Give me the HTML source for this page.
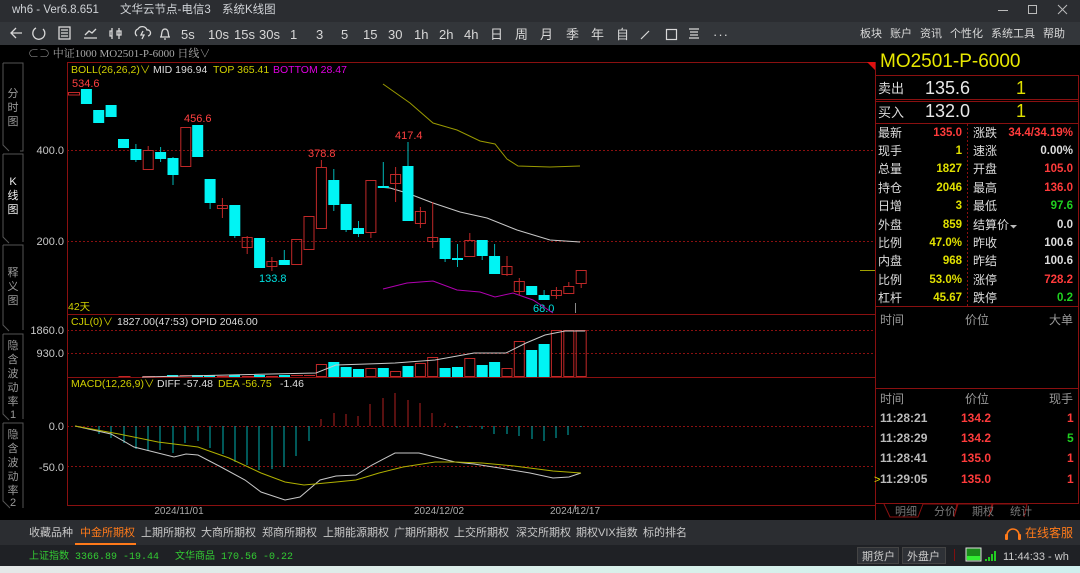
<!DOCTYPE html>
<html><head><meta charset="utf-8"><style>
*{margin:0;padding:0}
body{width:1080px;height:573px;overflow:hidden;background:#000;font-family:"Liberation Sans","Noto Sans CJK SC",sans-serif;position:relative}
.a{position:absolute;white-space:nowrap}
#title{left:0;top:0;width:1080px;height:22px;background:#2b2d31}
#tool{left:0;top:22px;width:1080px;height:23px;background:#33363a}
#tabs{left:0;top:520px;width:1080px;height:25px;background:#2b2d31}
#stat{left:0;top:545px;width:1080px;height:21px;background:#1f2125}
#bot{left:0;top:566px;width:1080px;height:7px;background:linear-gradient(90deg,#e4e8e8,#d8f0ea 60%,#cfefee)}
</style></head><body>
<div class="a" id="title"></div><div class="a" id="tool"></div><div class="a" id="tabs"></div><div class="a" id="stat"></div><div class="a" id="bot"></div>
<svg class="a" style="left:0;top:0" width="1080" height="573" viewBox="0 0 1080 573" font-family="Liberation Sans, Noto Sans CJK SC, sans-serif">
<!-- title -->
<g fill="#cfd2d6" font-size="11.5">
<text x="12" y="13">wh6  -  Ver6.8.651</text><text x="120" y="13">文华云节点-电信3</text><text x="222" y="13">系统K线图</text></g>
<g stroke="#bbb" fill="none" stroke-width="1"><line x1="998" y1="10.5" x2="1008" y2="10.5"/><rect x="1028.5" y="5.5" width="8" height="8"/><path d="M1058 5l9 9M1067 5l-9 9"/></g>
<!-- toolbar icons -->
<g stroke="#d8d8d8" fill="none" stroke-width="1.3">
<path d="M22 33h-11M16 28l-5 5 5 5"/>
<path d="M36 28a6 6 0 1 0 7 1"/>
<rect x="59" y="27" width="11" height="12"/><path d="M61 30h7M61 33h7M61 36h7"/>
<path d="M84 38h13M85 35l4-4 3 2 4-4"/>
<path d="M112 28v11M112 31h-2v5h2M119 28v11M117 31h4v4h-4z"/>
<path d="M137 36a4 4 0 0 1 1-7 5 5 0 0 1 9 1 3 3 0 0 1 1 6M143 31l-2 4h3l-2 4"/>
<path d="M160 37h10M161 37c1-2 0-8 4-8s3 6 4 8M164 39h2"/>
</g>
<g fill="#d8d8d8" font-size="13">
<text x="181" y="39">5s</text><text x="208" y="39">10s</text><text x="234" y="39">15s</text><text x="259" y="39">30s</text>
<text x="290" y="39">1</text><text x="316" y="39">3</text><text x="341" y="39">5</text><text x="363" y="39">15</text><text x="388" y="39">30</text>
<text x="414" y="39">1h</text><text x="439" y="39">2h</text><text x="464" y="39">4h</text><text x="490" y="39">日</text><text x="515" y="39">周</text>
<text x="540" y="39">月</text><text x="566" y="39">季</text><text x="591" y="39">年</text><text x="616" y="39">自</text>
<text x="713" y="39" letter-spacing="1">···</text></g>
<g stroke="#d8d8d8" fill="none" stroke-width="1.2"><path d="M641 39l8-8"/><rect x="666.5" y="29.5" width="10" height="10"/><path d="M689 29h10M690 32h8M690 35h8M689 38h10"/></g>
<g fill="#d8d8d8" font-size="11"><text x="860" y="37">板块</text><text x="890" y="37">账户</text><text x="920" y="37">资讯</text><text x="950" y="37">个性化</text><text x="991" y="37">系统工具</text><text x="1043" y="37">帮助</text></g>
<!-- chart header -->
<g fill="#a8a8a8" font-size="11" font-family="Liberation Serif, Noto Serif CJK SC, serif"><text x="28" y="57">⊂⊃ 中证1000 MO2501-P-6000   日线∨</text></g>
<!-- left tabs -->
<g stroke="#555" fill="none"><path d="M3 63h20v88l-3 0M3 63v82l6 6"/><path d="M3 154h20v88M3 154v83l6 6"/><path d="M3 245h20v85M3 245v80l6 6"/><path d="M3 334h20v85M3 334v80l6 6"/><path d="M3 423h20v85M3 423v78l7 7"/></g>
<g fill="#999" font-size="11" text-anchor="middle"><text x="13" y="97">分</text><text x="13" y="111">时</text><text x="13" y="125">图</text>
<text x="13" y="185" fill="#eee">K</text><text x="13" y="199" fill="#eee">线</text><text x="13" y="213" fill="#eee">图</text>
<text x="13" y="276">释</text><text x="13" y="290">义</text><text x="13" y="304">图</text>
<text x="13" y="349">隐</text><text x="13" y="363">含</text><text x="13" y="377">波</text><text x="13" y="391">动</text><text x="13" y="405">率</text><text x="13" y="418">1</text>
<text x="13" y="438">隐</text><text x="13" y="452">含</text><text x="13" y="466">波</text><text x="13" y="480">动</text><text x="13" y="494">率</text><text x="13" y="506">2</text></g>
<!-- axes -->
<g fill="#c8c8c8" font-size="11" text-anchor="end"><text x="64" y="154">400.0</text><text x="64" y="245">200.0</text><text x="64" y="334">1860.0</text><text x="64" y="357">930.0</text><text x="64" y="430">0.0</text><text x="64" y="471">-50.0</text></g>
<g stroke="#8a1010" stroke-dasharray="2 2"><line x1="67" y1="150.5" x2="875" y2="150.5"/><line x1="67" y1="241.5" x2="875" y2="241.5"/><line x1="67" y1="330.5" x2="875" y2="330.5"/><line x1="67" y1="353.5" x2="875" y2="353.5"/><line x1="67" y1="426.5" x2="875" y2="426.5"/><line x1="67" y1="466.5" x2="875" y2="466.5"/></g>
<g stroke="#8a1010" fill="none"><path d="M67.5 62v443.5H875.5M67 62.5h809M67 314.5h808M67 377.5h808M875.5 62V520"/></g>
<path d="M867 62h8v8z" fill="#e01010"/>
<line x1="860" y1="270.5" x2="875" y2="270.5" stroke="#a0a000"/>
<!-- indicator headers -->
<g font-size="10.5"><text x="71" y="73" fill="#d0d000">BOLL(26,26,2)∨</text><text x="153" y="73" fill="#ddd">MID 196.94</text><text x="213" y="73" fill="#d0d000">TOP 365.41</text><text x="273" y="73" fill="#e000e0">BOTTOM 28.47</text>
<text x="68" y="310" fill="#d0d000">42天</text>
<text x="71" y="325" fill="#d0d000">CJL(0)∨</text><text x="117" y="325" fill="#ddd">1827.00(47:53)  OPID 2046.00</text>
<text x="71" y="387" fill="#d0d000">MACD(12,26,9)∨</text><text x="157" y="387" fill="#ddd">DIFF -57.48</text><text x="218" y="387" fill="#d0d000">DEA -56.75</text><text x="280" y="387" fill="#ddd">-1.46</text></g>
<!-- candle labels -->
<g font-size="11"><text x="72" y="87" fill="#ff4040">534.6</text><text x="184" y="122" fill="#ff4040">456.6</text><text x="308" y="157" fill="#ff4040">378.8</text><text x="395" y="139" fill="#ff4040">417.4</text><text x="259" y="282" fill="#00e0e0">133.8</text><text x="533" y="312" fill="#00e0e0">68.0</text></g>
<!-- BOLL lines -->
<g fill="none" stroke-width="1"><polyline stroke="#9a9a00" points="383,84 410,103 433,123 457,130 480,141 495,144 507,159 518,166 550,167 580,166"/>
<polyline stroke="#c8c8c8" points="378,187 390,188 407,193 433,203 460,212 487,218 517,230 550,240 580,242"/>
<polyline stroke="#b000b0" points="383,289 407,283 433,281 457,290 480,292 495,297 513,293 533,300 553,313"/></g>
<!-- candles -->
<g stroke-width="1">
<g stroke="#00b8b8"><line x1="135.9" y1="144" x2="135.9" y2="162"/><line x1="160.6" y1="147" x2="160.6" y2="162"/><line x1="173" y1="157" x2="173" y2="185"/><line x1="210.1" y1="179" x2="210.1" y2="209"/><line x1="234.8" y1="205" x2="234.8" y2="238"/><line x1="284.3" y1="250" x2="284.3" y2="265"/><line x1="333.8" y1="169" x2="333.8" y2="211"/><line x1="346.1" y1="204" x2="346.1" y2="232"/><line x1="358.5" y1="221" x2="358.5" y2="237"/><line x1="383.3" y1="162" x2="383.3" y2="188"/><line x1="408" y1="142" x2="408" y2="221"/><line x1="445.1" y1="238" x2="445.1" y2="262"/><line x1="457.5" y1="244" x2="457.5" y2="267"/><line x1="482.2" y1="240" x2="482.2" y2="260"/><line x1="494.6" y1="244" x2="494.6" y2="274"/><line x1="544.1" y1="290" x2="544.1" y2="300"/></g>
<g fill="#00f4f4"><rect x="80.9" y="89" width="11" height="15"/><rect x="93.2" y="110" width="11" height="13"/><rect x="105.6" y="105" width="11" height="12"/><rect x="118" y="139" width="11" height="9"/><rect x="130.4" y="149" width="11" height="11"/><rect x="155.1" y="152" width="11" height="7"/><rect x="167.5" y="158" width="11" height="17"/><rect x="192.2" y="125" width="11" height="32"/><rect x="204.6" y="179" width="11" height="24"/><rect x="229.3" y="205" width="11" height="31"/><rect x="254.1" y="238" width="11" height="30"/><rect x="278.8" y="260" width="11" height="5"/><rect x="328.3" y="180" width="11" height="25"/><rect x="340.6" y="204" width="11" height="26"/><rect x="353" y="228" width="11" height="6"/><rect x="377.8" y="186" width="11" height="2"/><rect x="402.5" y="166" width="11" height="55"/><rect x="439.6" y="238" width="11" height="21"/><rect x="452" y="258" width="11" height="2"/><rect x="476.7" y="240" width="11" height="16"/><rect x="489.1" y="256" width="11" height="18"/><rect x="526.2" y="286" width="11" height="9"/><rect x="538.6" y="295" width="11" height="5"/></g>
<g stroke="#c02828" fill="none">
<rect x="68.5" y="92.5" width="11" height="2.5"/><line x1="148.2" y1="146" x2="148.2" y2="150"/><rect x="143.2" y="150.5" width="10" height="19"/><rect x="180.8" y="127.5" width="10" height="39"/><line x1="222.4" y1="198" x2="222.4" y2="218"/><rect x="217.4" y="205.5" width="10" height="3"/><line x1="247.2" y1="236" x2="247.2" y2="254"/><rect x="242.2" y="237.5" width="10" height="10"/><line x1="271.9" y1="257" x2="271.9" y2="271"/><rect x="266.9" y="261.5" width="10" height="5"/><rect x="291.7" y="239.5" width="10" height="25"/><rect x="304" y="216.5" width="10" height="33"/><line x1="321.4" y1="160" x2="321.4" y2="167"/><rect x="316.4" y="167.5" width="10" height="61"/><line x1="370.9" y1="233" x2="370.9" y2="238"/><rect x="365.9" y="180.5" width="10" height="52"/><line x1="395.6" y1="167" x2="395.6" y2="202"/><rect x="390.6" y="174.5" width="10" height="9"/><line x1="420.4" y1="207" x2="420.4" y2="228"/><rect x="415.4" y="211.5" width="10" height="12"/><line x1="432.7" y1="202" x2="432.7" y2="248"/><rect x="427.7" y="237.5" width="10" height="4"/><line x1="469.8" y1="233" x2="469.8" y2="240"/><rect x="464.8" y="240.5" width="10" height="16"/><line x1="507" y1="256" x2="507" y2="276"/><rect x="502" y="266.5" width="10" height="8"/><line x1="519.3" y1="278" x2="519.3" y2="295"/><rect x="514.3" y="281.5" width="10" height="10"/><line x1="556.4" y1="287" x2="556.4" y2="299"/><rect x="551.4" y="290.5" width="10" height="5"/><line x1="568.8" y1="282" x2="568.8" y2="286"/><rect x="563.8" y="286.5" width="10" height="7"/><line x1="581.2" y1="284" x2="581.2" y2="288"/><rect x="576.2" y="270.5" width="10" height="13"/></g>
<line x1="575.5" y1="303" x2="575.5" y2="313" stroke="#888"/>
</g>
<!-- volume -->
<g fill="none" stroke="#c02828"><path d="M118.5 376.5h12M143 376.5h12M180 375.5h12M217 376.5h12M242 376.5h12M266 376.5h12M291 375.5h12M304 375.5h11"/></g>
<g fill="#00f4f4"><rect x="167" y="375" width="11" height="2"/><rect x="192" y="375" width="11" height="2"/><rect x="204" y="375" width="11" height="2"/><rect x="229" y="375" width="11" height="2"/><rect x="254" y="375" width="11" height="2"/><rect x="279" y="375" width="11" height="2"/>
<rect x="328.3" y="362" width="11" height="15"/><rect x="340.6" y="367" width="11" height="10"/><rect x="353" y="369" width="11" height="8"/><rect x="377.8" y="368" width="11" height="9"/><rect x="402.5" y="366" width="11" height="11"/><rect x="439.6" y="368" width="11" height="9"/><rect x="452" y="367" width="11" height="10"/><rect x="476.7" y="365" width="11" height="12"/><rect x="489.1" y="362" width="11" height="15"/><rect x="526.2" y="350" width="11" height="27"/><rect x="538.6" y="344" width="11" height="33"/></g>
<g fill="none" stroke="#c02828"><rect x="316.4" y="364.5" width="10" height="12"/><rect x="365.9" y="368.5" width="10" height="8"/><rect x="390.6" y="371.5" width="10" height="5"/><rect x="415.4" y="363.5" width="10" height="13"/><rect x="427.7" y="357.5" width="10" height="19"/><rect x="464.8" y="358.5" width="10" height="18"/><rect x="502" y="368.5" width="10" height="8"/><rect x="514.3" y="341.5" width="10" height="35"/><rect x="551.4" y="330.5" width="10" height="46"/><rect x="563.8" y="330.5" width="10" height="46"/><rect x="576.2" y="330.5" width="10" height="46"/></g>
<polyline fill="none" stroke="#c8c8c8" points="142,377 316,373 336,365 395,363 435,360 474,353 506,353 526,343 545,335 565,331 585,331"/>
<!-- MACD -->
<g stroke="#00b0b0"><path d="M99 426v8M111 426v12M124 426v17M136 426v23M148 426v25M160 426v24M173 426v27M185 426v17M198 426v15M210 426v22M223 426v28M235 426v36M247 426v39M259 426v44M272 426v43M284 426v41M296 426v30M309 426v15M457 426v2M470 426v1M482 426v3M494 426v8M507 426v8M519 426v10M532 426v13M544 426v15M556 426v12M568 426v9M581 426v1"/></g>
<g stroke="#b02020"><path d="M321 426v-7M334 426v-13M346 426v-12M358 426v-10M370 426v-22M383 426v-28M395 426v-33M408 426v-26M420 426v-23M432 426v-13M445 426v-3"/></g>
<polyline fill="none" stroke="#c8c8c8" points="75,426 111,434 134,447 174,457 186,454 198,455 221,467 245,480 261,492 285,500 300,497 320,480 336,476 356,475 372,465 395,453 419,453 435,457 455,462 474,464 506,469 530,473 553,478 569,477 581,473"/>
<polyline fill="none" stroke="#b0b000" points="75,426 119,434 158,442 198,447 229,458 261,473 285,482 304,485 336,482 356,480 379,473 403,467 435,462 455,462 482,463 514,466 553,471 581,473"/>
<line x1="575.5" y1="505" x2="575.5" y2="512" stroke="#888"/>
<g fill="#aaa" font-size="10" text-anchor="middle"><text x="179" y="514">2024/11/01</text><text x="439" y="514">2024/12/02</text><text x="575" y="514">2024/12/17</text></g>
<!-- right panel -->
<text x="880" y="67" fill="#e8e800" font-size="19">MO2501-P-6000</text>
<g stroke="#8a1010" fill="none"><path d="M876 75.5h203M876 99.5h203M876 101.5h203M876 123.5h203M876 306.5h203M876 388.5h203M876 503.5h203M1078.5 75v429"/><line x1="967.5" y1="124" x2="967.5" y2="306" stroke-dasharray="2 2"/></g>
<g fill="#ddd" font-size="13"><text x="878" y="93">卖出</text><text x="878" y="117">买入</text></g>
<g font-size="18"><text x="925" y="94" fill="#e8e8e8">135.6</text><text x="925" y="117" fill="#e8e8e8">132.0</text><text x="1016" y="94" fill="#e0e000">1</text><text x="1016" y="117" fill="#e0e000">1</text></g>
<g fill="#ddd" font-size="12"><text x="878" y="137">最新</text><text x="878" y="155">现手</text><text x="878" y="173">总量</text><text x="878" y="192">持仓</text><text x="878" y="210">日增</text><text x="878" y="229">外盘</text><text x="878" y="247">比例</text><text x="878" y="265">内盘</text><text x="878" y="284">比例</text><text x="878" y="302">杠杆</text>
<text x="973" y="137">涨跌</text><text x="973" y="155">速涨</text><text x="973" y="173">开盘</text><text x="973" y="192">最高</text><text x="973" y="210">最低</text><text x="973" y="229">结算价</text><text x="973" y="247">昨收</text><text x="973" y="265">昨结</text><text x="973" y="284">涨停</text><text x="973" y="302">跌停</text></g>
<path d="M1010 225h7l-3.5 3.5z" fill="#bbb"/>
<g font-size="11.5" font-weight="bold" text-anchor="end">
<text x="962" y="136" fill="#ff3b3b">135.0</text><text x="962" y="154" fill="#e0e000">1</text><text x="962" y="172" fill="#e0e000">1827</text><text x="962" y="191" fill="#e0e000">2046</text><text x="962" y="209" fill="#e0e000">3</text><text x="962" y="228" fill="#e0e000">859</text><text x="962" y="246" fill="#e0e000">47.0%</text><text x="962" y="264" fill="#e0e000">968</text><text x="962" y="283" fill="#e0e000">53.0%</text><text x="962" y="301" fill="#e0e000">45.67</text>
<text x="1073" y="136" fill="#ff3b3b">34.4/34.19%</text><text x="1073" y="154" fill="#ddd">0.00%</text><text x="1073" y="172" fill="#ff3b3b">105.0</text><text x="1073" y="191" fill="#ff3b3b">136.0</text><text x="1073" y="209" fill="#20d020">97.6</text><text x="1073" y="228" fill="#ddd">0.0</text><text x="1073" y="246" fill="#ddd">100.6</text><text x="1073" y="264" fill="#ddd">100.6</text><text x="1073" y="283" fill="#ff3b3b">728.2</text><text x="1073" y="301" fill="#20d020">0.2</text></g>
<g fill="#999" font-size="12"><text x="880" y="324">时间</text><text x="965" y="324">价位</text><text x="1049" y="324">大单</text><text x="880" y="403">时间</text><text x="965" y="403">价位</text><text x="1049" y="403">现手</text></g>
<g font-size="12" font-weight="bold"><g fill="#bbb"><text x="880" y="422">11:28:21</text><text x="880" y="442">11:28:29</text><text x="880" y="462">11:28:41</text><text x="880" y="483">11:29:05</text></g>
<g fill="#ff3b3b"><text x="961" y="422">134.2</text><text x="961" y="442">134.2</text><text x="961" y="462">135.0</text><text x="961" y="483">135.0</text><text x="1067" y="422">1</text><text x="1067" y="462">1</text><text x="1067" y="483">1</text></g><text x="1067" y="442" fill="#20d020">5</text></g>
<text x="874" y="483" fill="#e0e000" font-size="11">&gt;</text>
<g stroke="#8a1010" fill="none"><path d="M884 504l6 13h28l5-13M918 517l5-13h34l-3 13M954 517l4-13h34l-3 13M989 517l4-13h34l-3 13"/></g>
<g fill="#777" font-size="11"><text x="895" y="515">明细</text><text x="934" y="515">分价</text><text x="972" y="515">期权</text><text x="1010" y="515">统计</text></g>
<!-- bottom tabs -->
<g fill="#c8c8c8" font-size="11"><text x="29" y="536">收藏品种</text><text x="80" y="536" fill="#ff7a1a">中金所期权</text><text x="141" y="536">上期所期权</text><text x="201" y="536">大商所期权</text><text x="262" y="536">郑商所期权</text><text x="323" y="536">上期能源期权</text><text x="394" y="536">广期所期权</text><text x="454" y="536">上交所期权</text><text x="516" y="536">深交所期权</text><text x="576" y="536">期权VIX指数</text><text x="643" y="536">标的排名</text></g>
<rect x="75" y="543" width="61" height="2" fill="#ff7a1a"/>
<path d="M1007 538v-3a6 6 0 0 1 12 0v3" fill="none" stroke="#ff7a1a" stroke-width="1.6"/><rect x="1005" y="534" width="3" height="6" rx="1" fill="#ff7a1a"/><rect x="1018" y="534" width="3" height="6" rx="1" fill="#ff7a1a"/>
<text x="1025" y="537" fill="#ff7a1a" font-size="12">在线客服</text>
<g font-size="10" font-family="Liberation Mono, Noto Sans CJK SC, monospace" fill="#33cc33"><text x="29" y="559">上证指数 3366.89 -19.44</text><text x="175" y="559">文华商品 170.56 -0.22</text></g>
<g><rect x="857.5" y="547.5" width="41" height="16" fill="#2e3136" stroke="#444"/><rect x="902.5" y="547.5" width="43" height="16" fill="#2e3136" stroke="#444"/>
<text x="862" y="560" fill="#ccc" font-size="11">期货户</text><text x="907" y="560" fill="#ccc" font-size="11">外盘户</text>
<line x1="954.5" y1="549" x2="954.5" y2="561" stroke="#801010"/>
<rect x="966" y="548" width="15" height="13" fill="#1a8a1a" stroke="#ddd"/><rect x="967" y="556" width="13" height="4" fill="#33ee33"/>
<path d="M985 561h2v-2h-2zM988 561h2v-4h-2zM991 561h2v-7h-2zM994 561h2v-10h-2z" fill="#22cc22"/>
<text x="1003" y="560" fill="#ccc" font-size="11">11:44:33 - wh</text></g>
</svg>
</body></html>
